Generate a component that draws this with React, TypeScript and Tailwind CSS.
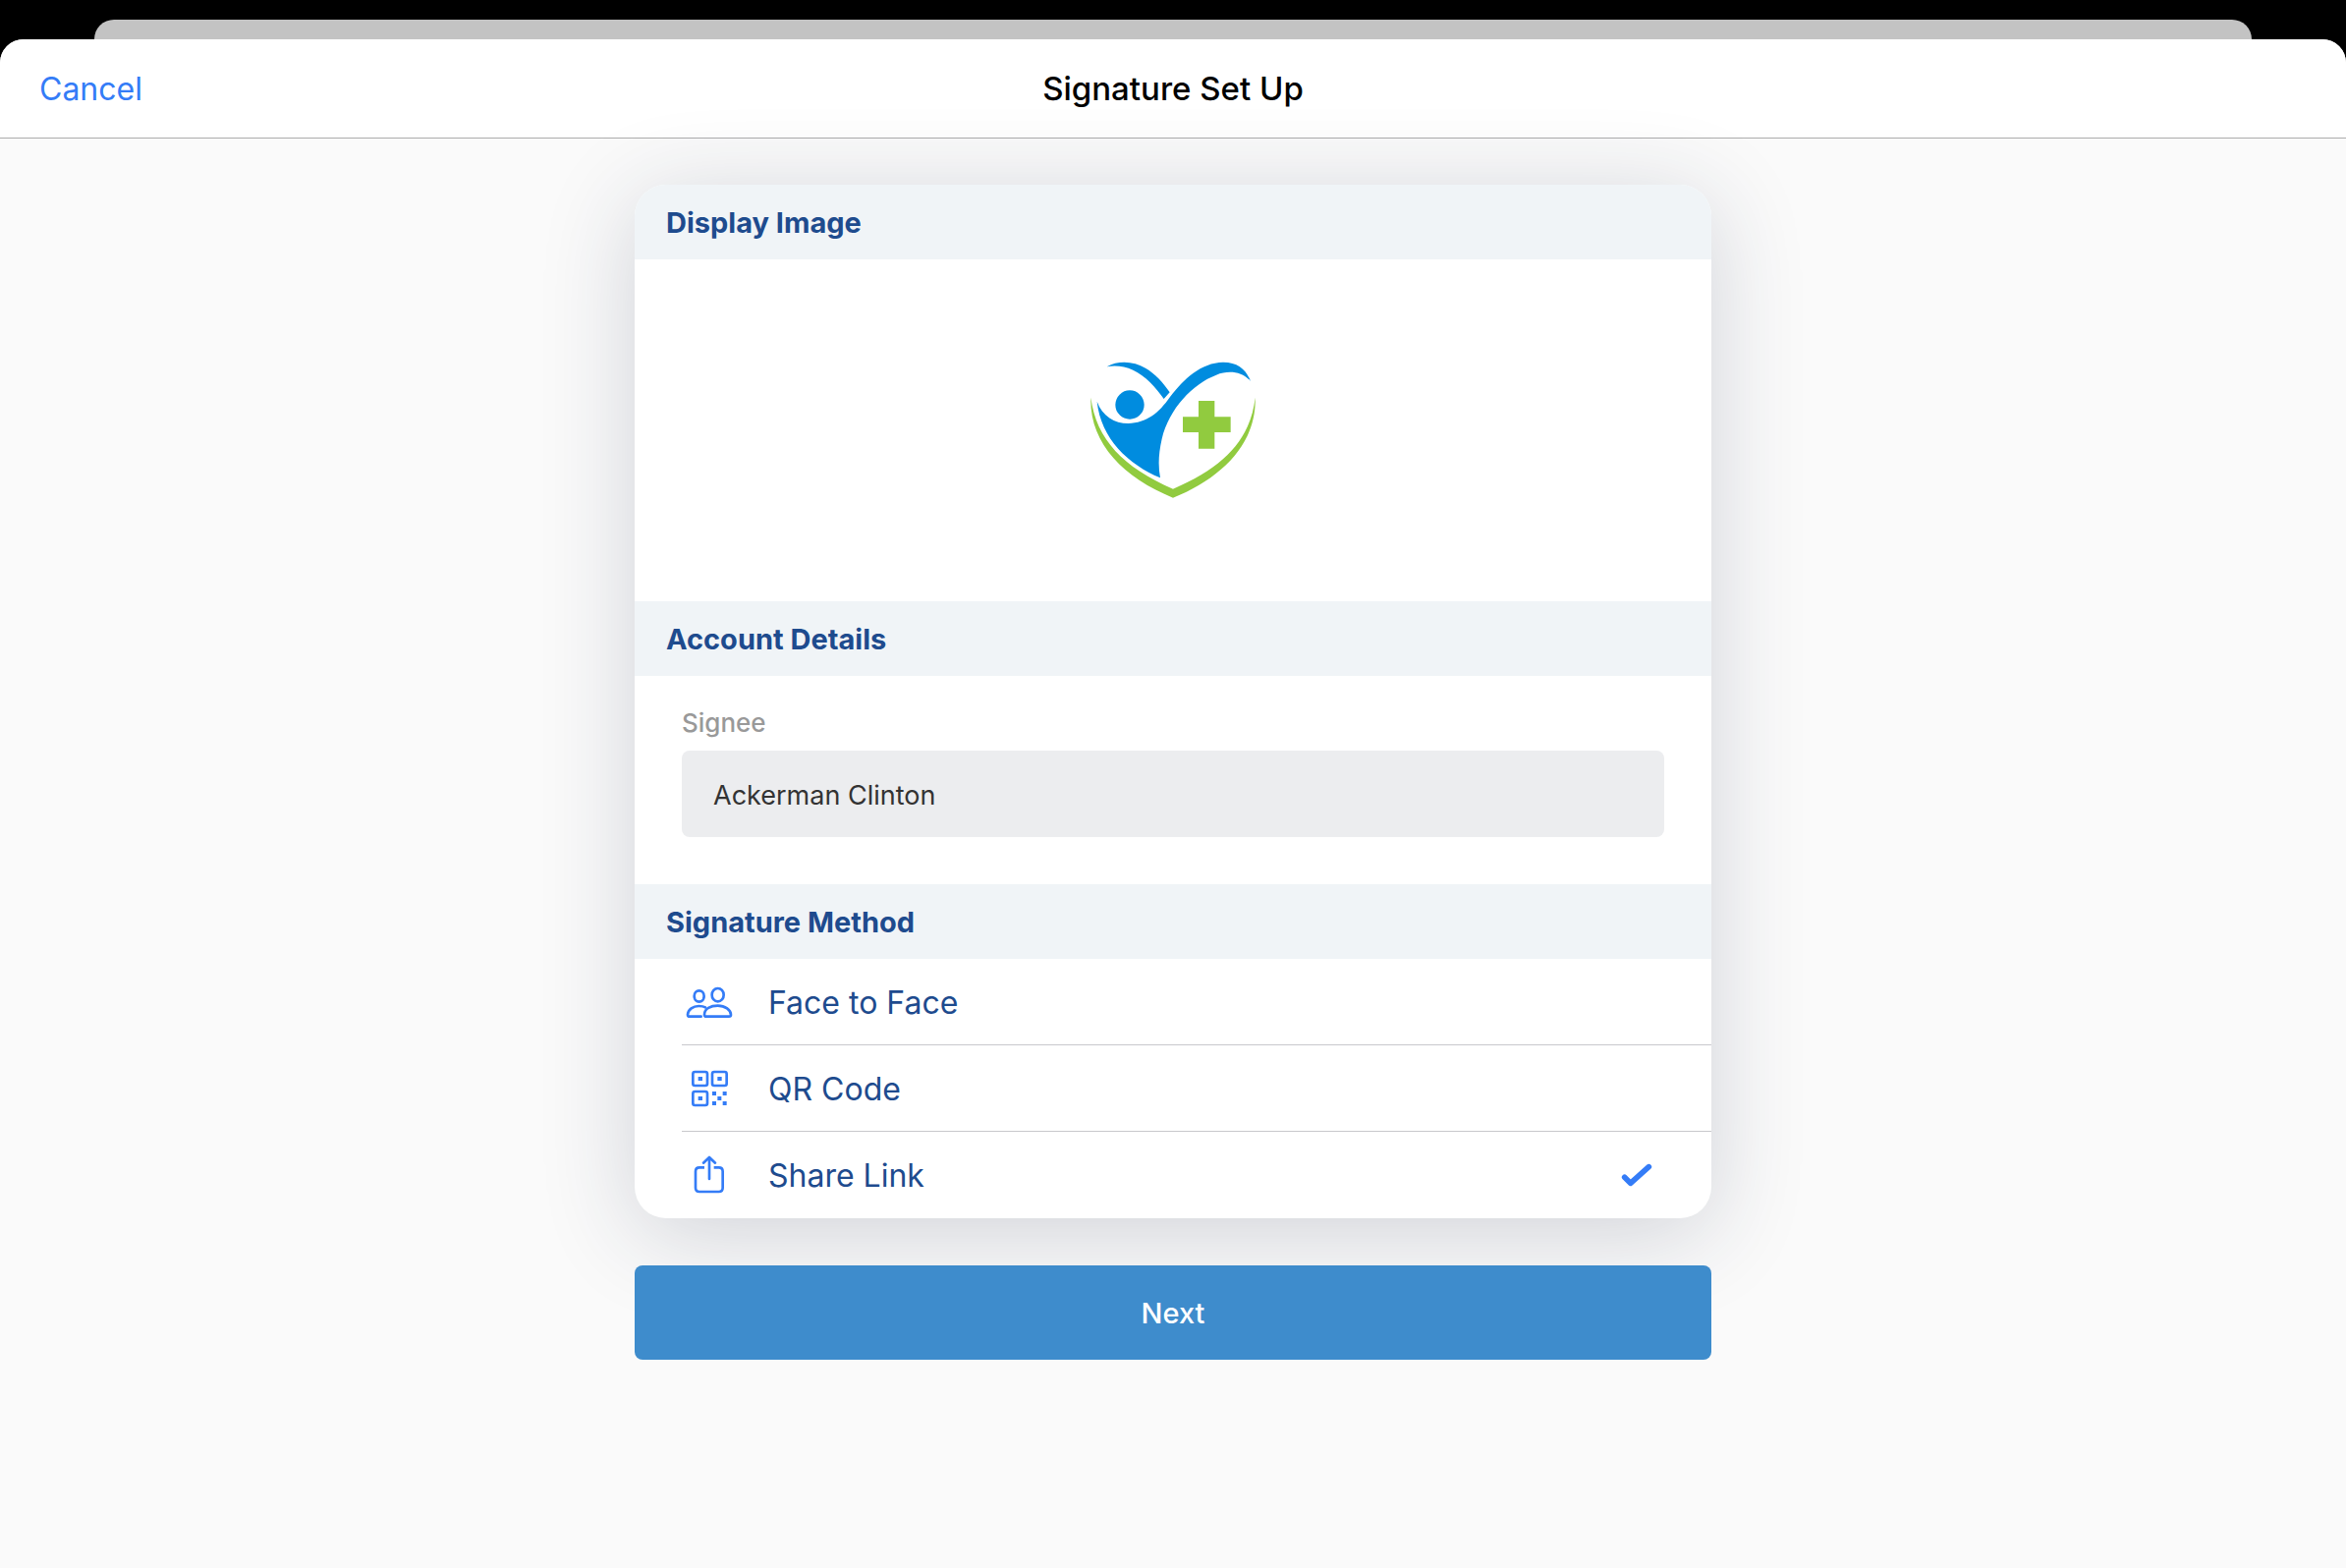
import React, { useState } from "react";

function PeopleIcon() {
  return (
    <svg viewBox="234 348 144 144" className="size-12 shrink-0 text-[#347cf7]" fill="none" stroke="currentColor" strokeWidth="8" strokeLinecap="round" strokeLinejoin="round" aria-hidden="true">
      <ellipse cx="332" cy="398" rx="18" ry="20" />
      <ellipse cx="275" cy="402" rx="15" ry="17" />
      <path d="M291 458 C291 440 310 431 332 431 C354 431 372 444 372 459 Q372 464 366 464 H297 Q291 464 291 458 Z" />
      <path d="M281 464 H246 Q240 464 240 458 C241 442 257 432 274 432 C282 432 289 433 294 436" />
    </svg>
  );
}

function QrIcon() {
  return (
    <svg viewBox="234 612 144 144" className="size-12 shrink-0 text-[#347cf7]" aria-hidden="true">
      <g fill="none" stroke="currentColor" strokeWidth="8">
        <rect x="256" y="633" width="44" height="42" rx="6" />
        <rect x="315" y="633" width="44" height="42" rx="6" />
        <rect x="256" y="693" width="44" height="42" rx="6" />
      </g>
      <g fill="currentColor">
        <rect x="272" y="648" width="13" height="12" />
        <rect x="331" y="648" width="13" height="12" />
        <rect x="272" y="708" width="13" height="12" />
        <rect x="315" y="693" width="12" height="12" />
        <rect x="347" y="693" width="12" height="12" />
        <rect x="331" y="708" width="12" height="12" />
        <rect x="315" y="723" width="12" height="12" />
        <rect x="347" y="723" width="12" height="12" />
      </g>
    </svg>
  );
}

function ShareIcon() {
  return (
    <svg viewBox="234 876 144 144" className="size-12 shrink-0 text-[#347cf7]" fill="none" stroke="currentColor" strokeWidth="8" strokeLinecap="round" strokeLinejoin="round" aria-hidden="true">
      <path d="M306 960 V895 M288 911 L306 894 L324 911" />
      <path strokeLinecap="butt" d="M291 925 H276 Q264 925 264 937 V987 Q264 999 276 999 H335 Q347 999 347 987 V937 Q347 925 335 925 H320" />
    </svg>
  );
}

function CheckIcon() {
  return (
    <svg viewBox="0 0 96 72" className="h-6 w-8 shrink-0 text-[#347cf7]" fill="none" stroke="currentColor" strokeWidth="17" strokeLinecap="round" strokeLinejoin="round" aria-hidden="true">
      <path d="M11 43 L29 61 L85 11" />
    </svg>
  );
}

function Logo() {
  return (
    <svg viewBox="57 54 510 420" className="h-[140px] w-[170px]" role="img" aria-label="Clinic logo">
      <g fill="#008cdf">
        <path d="M110 70 C146 49 194 54 228 74 C258 92 282 118 302 148 L284 168 C260 133 228 98 190 80 C164 69 138 65 110 70 Z" />
        <circle cx="180" cy="186" r="44" />
        <path d="M80 176 C96 220 134 243 175 243 C232 241 268 212 303 162 C344 108 398 57 465 56 C510 56 535 78 549 114 C522 84 482 80 444 95 C372 122 300 198 278 290 C268 335 266 370 273 409 C176 368 92 290 80 176 Z" />
      </g>
      <g fill="#91cb3f">
        <path d="M342 223 H390 V174 H439 V223 H488 V270 H439 V320 H390 V270 H342 Z" />
        <path d="M61 164 C56 300 158 408 312 470 C466 408 568 300 563 164 C548 292 470 376 312 443 C160 376 78 292 61 164 Z" />
      </g>
    </svg>
  );
}

function SectionTitle({ children }: { children: React.ReactNode }) {
  return (
    <h2 className="flex h-[76px] items-center bg-[#f0f4f7] px-8 pt-px text-[29px] leading-9 font-bold text-[#1e4b8e]">
      {children}
    </h2>
  );
}

const methods = [
  { id: "face", label: "Face to Face", Icon: PeopleIcon },
  { id: "qr", label: "QR Code", Icon: QrIcon },
  { id: "link", label: "Share Link", Icon: ShareIcon },
];

export default function App() {
  const [method, setMethod] = useState("link");

  return (
    <div className="flex min-h-screen flex-col bg-black pt-5 font-['Inter',sans-serif]">
      <div className="mx-24 h-5 rounded-t-[20px] bg-[#c3c3c3]" />
      <div className="flex grow flex-col overflow-hidden rounded-t-[24px] bg-[#fafafa]">
        <header className="grid h-[101px] grid-cols-[1fr_auto_1fr] items-center border-b border-[#adadad] bg-white px-10">
          <button type="button" className="justify-self-start pt-0.5 text-[32px] leading-10 text-[#347cf7]">
            Cancel
          </button>
          <h1 className="text-[33px] leading-10 font-medium text-black">Signature Set Up</h1>
        </header>

        <main className="mx-auto flex w-full max-w-[1096px] flex-col gap-12 py-[47px]">
          <div className="overflow-hidden rounded-[32px] bg-white shadow-[0_16px_96px_rgba(30,42,72,0.19)]">
            <section>
              <SectionTitle>Display Image</SectionTitle>
              <div className="flex items-center justify-center py-[104px]">
                <Logo />
              </div>
            </section>

            <section>
              <SectionTitle>Account Details</SectionTitle>
              <div className="flex flex-col gap-3 px-12 pt-8 pb-12">
                <label htmlFor="signee" className="text-[26px] leading-8 font-medium text-[#999999]">
                  Signee
                </label>
                <input
                  id="signee"
                  readOnly
                  value="Ackerman Clinton"
                  className="h-[88px] w-full rounded-lg bg-[#ecedef] px-8 pt-0.5 text-[27px] text-[#333333] outline-none"
                />
              </div>
            </section>

            <section>
              <SectionTitle>Signature Method</SectionTitle>
              <div role="radiogroup" aria-label="Signature Method" className="pl-12">
                {methods.map(({ id, label, Icon }) => (
                  <label
                    key={id}
                    className="relative flex h-[88px] cursor-pointer items-center border-b border-[#c8c8cc] pr-[60px] pl-1 last:border-b-0"
                  >
                    <input
                      type="radio"
                      name="method"
                      value={id}
                      checked={method === id}
                      onChange={() => setMethod(id)}
                      className="sr-only"
                    />
                    <Icon />
                    <span className="ml-9 grow pt-0.5 text-[32px] leading-10 text-[#1e4b8e]">{label}</span>
                    {method === id && <CheckIcon />}
                  </label>
                ))}
              </div>
            </section>
          </div>

          <button type="button" className="relative h-24 w-full rounded-lg bg-[#3e8ccc] pt-px text-[29px] leading-9 font-medium text-white">
            Next
          </button>
        </main>
      </div>
    </div>
  );
}
